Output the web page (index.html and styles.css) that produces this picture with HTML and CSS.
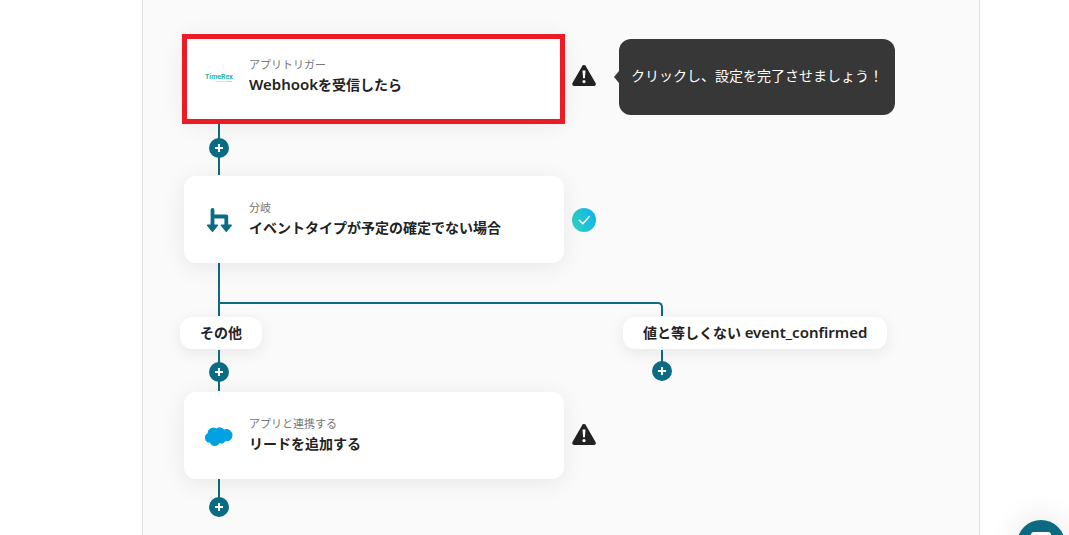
FILE: index.html
```html
<!DOCTYPE html>
<html lang="ja">
<head>
<meta charset="utf-8">
<meta name="viewport" content="width=device-width, initial-scale=1">
<title>フロー</title>
<link rel="stylesheet" href="styles.css">
</head>
<body>
<svg class="defs" aria-hidden="true">
  <symbol id="plus" viewBox="0 0 20 20"><path d="M10 6v8M6 10h8" fill="none" stroke="#fff" stroke-width="2"/></symbol>
  <symbol id="warning" viewBox="0 0 24 24">
    <path d="M12 2 21.800 19H2.200Z" fill="#222" stroke="#222" stroke-width="4" stroke-linejoin="round"/>
    <path d="M10.500 5.500h3l-.6 7.800h-1.800Z" fill="#fff"/><circle cx="12" cy="16.600" r="1.600" fill="#fff"/>
  </symbol>
</svg>
<main class="panel">
  <div class="flow">
    <div class="step">
      <article class="card card-marked">
        <svg class="logo" viewBox="0 0 28 28" role="img" aria-label="TimeRex">
          <text x="0" y="16" class="logo-text">TimeRex</text>
          <path d="M10 18.500h10" stroke="#d5e8e6" stroke-width="1"/><path d="M21 18.500h6" stroke="#a5dfd6" stroke-width="1"/>
        </svg>
        <div class="info"><p class="label">アプリトリガー</p><h2 class="title"><span class="latin">Webhook</span>を受信したら</h2></div>
      </article>
      <svg class="status" role="img" aria-label="未完了"><use href="#warning"/></svg>
      <div class="tip" role="tooltip">クリックし、設定を完了させましょう！</div>
    </div>
    <div class="link link-open"><button class="add" aria-label="追加"><svg><use href="#plus"/></svg></button></div>
    <div class="step">
      <article class="card">
        <svg class="logo" viewBox="0 0 28 28" aria-hidden="true">
          <path d="M7.500 4v16M7.500 10.500h13.800v9.500" fill="none" stroke="#0b6b82" stroke-width="3.800" stroke-linecap="round" stroke-linejoin="round"/>
          <path d="M2.600 19.300h9.800l-4.900 6ZM16.400 19.300h9.800l-4.900 6Z" fill="#0b6b82" stroke="#0b6b82" stroke-width="1.400" stroke-linejoin="round"/>
        </svg>
        <div class="info"><p class="label">分岐</p><h2 class="title">イベントタイプが予定の確定でない場合</h2></div>
      </article>
      <svg class="status" viewBox="0 0 24 24" role="img" aria-label="完了">
        <defs><linearGradient id="done" x1="0" y1=".7" x2="1" y2=".3"><stop offset="0" stop-color="#2fd2bd"/><stop offset="1" stop-color="#0fb3f0"/></linearGradient></defs>
        <circle cx="12" cy="12" r="12" fill="url(#done)"/>
        <path d="m7.300 12.200 3.500 3.600 6.600-7.300" fill="none" stroke="#fff" stroke-width="1.500" stroke-linecap="round" stroke-linejoin="round"/>
      </svg>
    </div>
    <div class="fork"><div class="elbow"></div></div>
    <div class="branches">
      <section class="branch">
        <h3 class="pill">その他</h3>
        <div class="link link-branch"><button class="add" aria-label="追加"><svg><use href="#plus"/></svg></button></div>
      </section>
      <section class="branch">
        <h3 class="pill">値と等しくない <span class="latin">event_confirmed</span></h3>
        <div class="link link-end"><button class="add" aria-label="追加"><svg><use href="#plus"/></svg></button></div>
      </section>
    </div>
    <div class="step">
      <article class="card">
        <svg class="logo" viewBox="0 0 28 28" role="img" aria-label="Salesforce" fill="#00a1e0">
          <path d="M11.600 6.600A4.900 4.900 0 0 1 19 7.600 6.100 6.100 0 1 1 20.300 19.200 4.500 4.500 0 0 1 14.500 21.100 5.100 5.100 0 0 1 5 20.600 4.900 4.900 0 0 1 2.700 11.300 5.600 5.600 0 0 1 11.600 6.600Z"/>
        </svg>
        <div class="info"><p class="label">アプリと連携する</p><h2 class="title">リードを追加する</h2></div>
      </article>
      <svg class="status" role="img" aria-label="未完了"><use href="#warning"/></svg>
    </div>
    <div class="link link-last"><button class="add" aria-label="追加"><svg><use href="#plus"/></svg></button></div>
  </div>
</main>
<button class="chat" aria-label="チャット"><svg viewBox="0 0 48 48"><rect x="14" y="12" width="20" height="22" rx="3" fill="#fff"/></svg></button>
</body>
</html>
```
FILE: styles.css
```css
* { box-sizing: border-box; }

body {
  margin: 0;
  padding: 0 89px 0 142px;
  background: #fff;
  color: #222;
  font-family: "Noto Sans", "Noto Sans CJK JP", sans-serif;
  font-size: 14px;
  overflow: hidden;
}

p, h2, h3 { margin: 0; }

.defs { display: none; }

.panel {
  min-height: 100vh;
  padding: 33px 40px 16px 41px;
  background: #fafafa;
  border: solid #e1e1e1;
  border-width: 0 1px;
}

.step {
  display: flex;
  align-items: center;
  gap: 8px;
}

.card {
  position: relative;
  display: flex;
  align-items: center;
  gap: 16px;
  width: 380px;
  height: 87px;
  padding: 0 21px;
  border-radius: 12px;
  background: #fff;
  box-shadow: 0 4px 24px rgba(0, 0, 0, 0.08);
}

.card-marked::after {
  content: "";
  position: absolute;
  inset: 1px -1px -4px -2px;
  border: 5px solid #ed1c24;
  background: transparent;
}

.logo {
  flex: none;
  width: 28px;
  height: 28px;
}

.logo-text {
  fill: #2eb5a3;
  font: bold 7px Roboto, sans-serif;
}

.info { padding-bottom: 2px; }

.label {
  color: #757575;
  font-size: 11px;
  line-height: 16px;
  margin-bottom: 2px;
}

.title {
  font-size: 14px;
  font-weight: 600;
  line-height: 20px;
}

.latin {
  font-size: 15px;
  line-height: 16px;
}

.status {
  flex: none;
  width: 24px;
  height: 24px;
  overflow: visible;
}

.tip {
  position: relative;
  margin-left: 15px;
  padding: 27px 12px 29px;
  border-radius: 12px;
  background: #373737;
  color: #fff;
  line-height: 20px;
  white-space: nowrap;
}

.tip::before {
  content: "";
  position: absolute;
  top: 32px;
  left: -5px;
  border: solid transparent;
  border-width: 6px 5px 6px 0;
  border-right-color: #373737;
}

.link {
  display: flex;
  justify-content: center;
  width: 20px;
  margin-left: 25px;
  background: linear-gradient(#0b6b82, #0b6b82) center / 2px 100% no-repeat;
}

.link-open { height: 55px; padding-top: 18px; margin-bottom: 1px; }
.link-branch { height: 41px; padding-top: 12px; margin: 1px 0 1px 29px; }
.link-end { height: 31px; padding-top: 11px; margin: 1px 0 0 29px; }
.link-last { height: 38px; padding-top: 18px; }

.add {
  width: 20px;
  height: 20px;
  padding: 0;
  border: 0;
  border-radius: 50%;
  background: #0b6b82;
}

.add svg {
  display: block;
  width: 20px;
  height: 20px;
}

.fork {
  display: flex;
  align-items: flex-end;
  width: 445px;
  height: 53px;
  margin: 0 0 1px 34px;
  border-left: 2px solid #0b6b82;
}

.elbow {
  flex: 1;
  height: 14px;
  border: solid #0b6b82;
  border-width: 2px 2px 0 0;
  border-top-right-radius: 5px;
}

.branches {
  display: grid;
  grid-template-columns: 443px 1fr;
  margin-left: -4px;
}

.pill {
  width: max-content;
  padding: 6px 20px;
  border-radius: 12px;
  background: #fff;
  box-shadow: 0 4px 16px rgba(0, 0, 0, 0.08);
  font-size: 14px;
  font-weight: 600;
  line-height: 20px;
}

.chat {
  position: fixed;
  right: 4px;
  bottom: -33px;
  width: 48px;
  height: 48px;
  padding: 0;
  border: 0;
  border-radius: 50%;
  background: #0b6b82;
  box-shadow: 0 0 32px rgba(0, 0, 0, 0.12);
}

.chat svg { display: block; }
```
